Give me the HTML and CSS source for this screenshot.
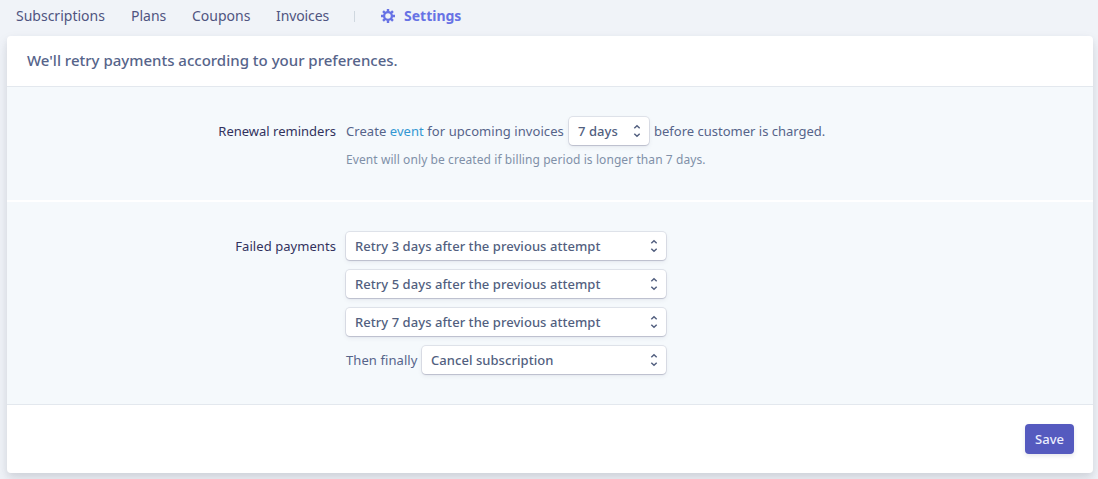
FILE: index.html
```html
<!DOCTYPE html>
<html lang="en">
<head>
<meta charset="utf-8">
<title>Billing settings</title>
<link rel="stylesheet" href="styles.css">
</head>
<body>
<svg class="defs" width="0" height="0"><symbol id="updown" viewBox="0 0 8 14"><path d="M1.3 4.2 4 1.8l2.7 2.4M1.3 9.8 4 12.2l2.7-2.4" fill="none" stroke="currentColor" stroke-width="1.5"/></symbol></svg>
<nav class="nav">
  <a class="nav-subscriptions">Subscriptions</a>
  <a class="nav-plans">Plans</a>
  <a class="nav-coupons">Coupons</a>
  <a class="nav-invoices">Invoices</a>
  <span class="divider"></span>
  <a class="active"><svg class="gear" viewBox="0 0 14 14"><circle cx="7" cy="7" r="3.9" fill="none" stroke="currentColor" stroke-width="2.3"/><path d="M7 0v2.8M7 11.2V14M0 7h2.8M11.2 7H14M2.05 2.05l2 2M9.95 9.95l2 2M2.05 11.95l2-2M9.95 4.05l2-2" stroke="currentColor" stroke-width="2.4"/></svg><span>Settings</span></a>
</nav>
<main class="card">
  <h1 class="title"><span>We'll retry payments according to your preferences.</span></h1>
  <section class="row reminders">
    <div class="label"><span class="label-renewal">Renewal reminders</span></div>
    <div class="content">
      <div class="line"><span class="create">Create <a class="link">event</a> for upcoming invoices</span><button class="select small"><span>7 days</span><svg><use href="#updown"/></svg></button><span class="before">before customer is charged.</span></div>
      <p class="hint"><span>Event will only be created if billing period is longer than 7 days.</span></p>
    </div>
  </section>
  <section class="row failed">
    <div class="label"><span class="label-failed">Failed payments</span></div>
    <div class="content stack">
      <button class="select wide"><span>Retry 3 days after the previous attempt</span><svg><use href="#updown"/></svg></button>
      <button class="select wide"><span>Retry 5 days after the previous attempt</span><svg><use href="#updown"/></svg></button>
      <button class="select wide"><span>Retry 7 days after the previous attempt</span><svg><use href="#updown"/></svg></button>
      <div class="line final"><span class="then">Then finally</span><button class="select cancel"><span>Cancel subscription</span><svg><use href="#updown"/></svg></button></div>
    </div>
  </section>
  <footer class="footer"><button class="save">Save</button></footer>
</main>
</body>
</html>
```
FILE: styles.css
```css
* { box-sizing: border-box; }
body { margin: 0; height: 479px; overflow: hidden; background: #f0f3f8; color: #56648a; font: 13px/20px "Noto Sans", sans-serif; }
.defs { display: block; height: 0; }
.nav { height: 36px; padding: 0 16px 4px; display: flex; align-items: center; font-size: 14px; color: #4f5480; white-space: nowrap; }
.nav a { margin-right: 26px; }
.nav-subscriptions { width: 89px; }
.nav-plans { width: 35px; }
.nav-coupons { width: 58px; }
.nav-invoices { width: 53px; letter-spacing: -.1px; }
.divider { width: 1px; height: 11px; margin: 0 26px 0 -1px; background: #cfd7df; }
.nav .active { display: flex; align-items: center; gap: 9px; color: #6772e5; font-weight: 700; margin: 0; }
.gear { width: 14px; height: 14px; }
.card { width: 1086px; height: 437px; margin-left: 7px; background: #fff; border-radius: 4px; overflow: hidden; box-shadow: 0 7px 14px rgba(60,66,87,.12), 0 3px 6px rgba(0,0,0,.06); }
.title { margin: 0; height: 51px; padding: 13px 20px 0; border-bottom: 1px solid #e3e8ee; font-size: 15px; line-height: 22px; font-weight: 500; }
.row { display: flex; gap: 10px; background: #f5f9fc; }
.reminders { height: 115px; padding-top: 29px; border-bottom: 2px solid #fff; }
.failed { height: 203px; padding-top: 29px; border-bottom: 1px solid #e3e8ee; }
.label { width: 329px; text-align: right; line-height: 30px; color: #32325d; white-space: nowrap; }
.label-failed { letter-spacing: .06px; }
.line { display: flex; align-items: center; white-space: nowrap; }
.create { width: 223px; letter-spacing: .065px; }
.link { color: #3297d3; }
.select { display: flex; align-items: center; justify-content: space-between; height: 28px; margin: 1px 0; padding: 0 8px 0 9px; border: 0; border-radius: 4px; background: #fff; color: #525f7f; font: 500 13px "Noto Sans", sans-serif; letter-spacing: .05px; box-shadow: 0 0 0 1px rgba(50,50,93,.1), 0 1px 1px rgba(50,50,93,.16), 0 2px 5px rgba(50,50,93,.08); white-space: nowrap; }
.select svg { width: 8px; height: 14px; }
.small { width: 80px; margin-right: 5px; }
.wide { width: 320px; }
.stack { display: flex; flex-direction: column; gap: 8px; }
.then { width: 76px; letter-spacing: .08px; }
.cancel { width: 244px; }
.hint { margin: 4px 0 0; font-size: 12px; letter-spacing: .08px; color: #8090a8; white-space: nowrap; }
.footer { height: 68px; padding: 19px 19px 0; display: flex; justify-content: flex-end; align-items: flex-start; }
.save { width: 49px; height: 30px; padding: 0; border: 0; border-radius: 4px; background: #555abf; color: #eceefe; font: 500 13px "Noto Sans", sans-serif; box-shadow: 0 2px 4px rgba(50,50,93,.12); }
```
